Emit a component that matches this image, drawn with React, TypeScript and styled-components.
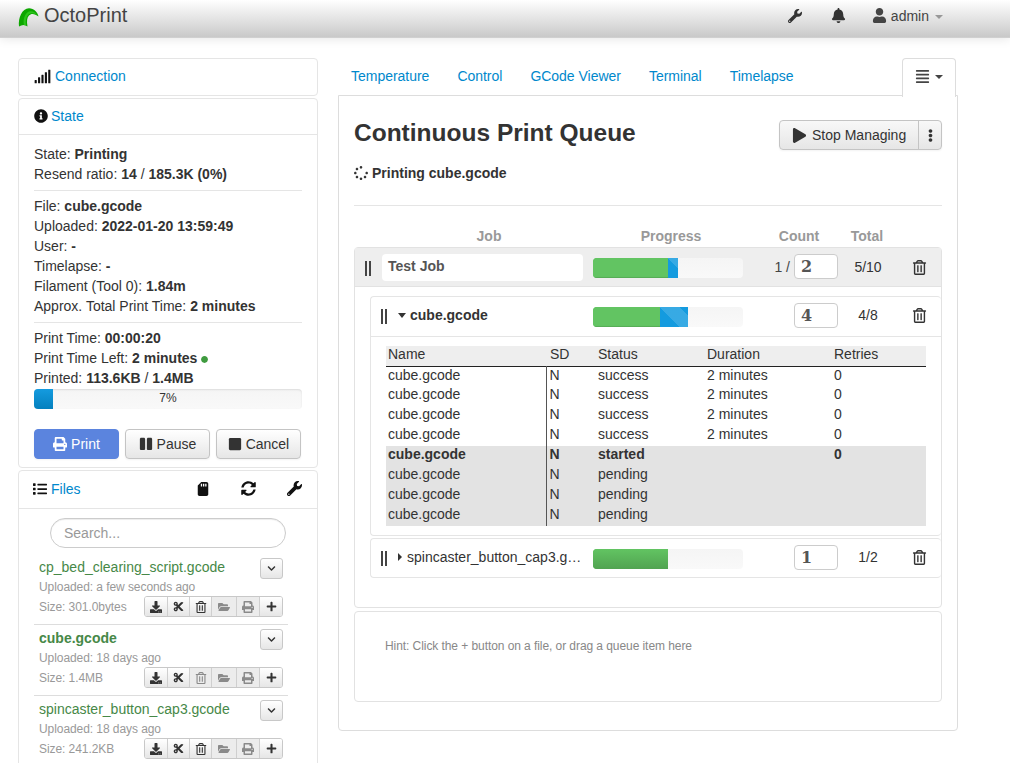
import styled, { createGlobalStyle } from "styled-components";
import {
  FaAlignJustify,
  FaBell,
  FaChevronDown,
  FaCircle,
  FaCut,
  FaDownload,
  FaEllipsisV,
  FaFolderOpen,
  FaInfoCircle,
  FaList,
  FaPause,
  FaPlay,
  FaPlus,
  FaPrint,
  FaRegTrashAlt,
  FaSdCard,
  FaSignal,
  FaSpinner,
  FaStop,
  FaSyncAlt,
  FaUser,
  FaWrench,
} from "react-icons/fa";

const historyRows = [
  { status: "success", duration: "2 minutes", retries: "0" },
  { status: "success", duration: "2 minutes", retries: "0" },
  { status: "success", duration: "2 minutes", retries: "0" },
  { status: "success", duration: "2 minutes", retries: "0" },
  { status: "started", duration: "", retries: "0", active: true },
  { status: "pending", duration: "", retries: "", pending: true },
  { status: "pending", duration: "", retries: "", pending: true },
  { status: "pending", duration: "", retries: "", pending: true },
];

const files = [
  { name: "cp_bed_clearing_script.gcode", uploaded: "a few seconds ago", size: "301.0bytes" },
  { name: "cube.gcode", uploaded: "18 days ago", size: "1.4MB", current: true },
  { name: "spincaster_button_cap3.gcode", uploaded: "18 days ago", size: "241.2KB" },
];

export default function App() {
  return (
    <Page>
      <GlobalStyle />
      <Navbar>
        <Brand>
          <svg width="21" height="19" viewBox="0 0 21 19">
            <path
              d="M1 18.5 C0 10 4 0.5 11 0.3 C16 0.3 19.5 4 20.5 8.5 C17 5.5 13 5 11 7.5 C9 9.5 8.5 13 9.5 18.5 C7 16.5 4 16.5 1 18.5 Z"
              fill="#0da600"
            />
            <path
              d="M6 17 C4.6 10.5 7.6 4 12 3.2 C15 2.8 17.5 4.4 19 6.8 C15.6 4.8 12.4 4.8 10.2 6.8 C8 9 7.4 13 8 17.2 Z"
              fill="#2bc41a"
            />
          </svg>
          OctoPrint
        </Brand>
        <NavItems>
          <NavWrench size={14} />
          <FaBell size={15} />
          <UserMenu>
            <FaUser size={15} />
            admin
            <NavCaret />
          </UserMenu>
        </NavItems>
      </Navbar>
      <Columns>
        <Sidebar>
          <Panel>
            <PanelHeading>
              <FaSignal size={17} color="#111" />
              <PanelLink>Connection</PanelLink>
            </PanelHeading>
          </Panel>
          <Panel>
            <PanelHeading $border>
              <FaInfoCircle size={14} color="#111" />
              <PanelLink>State</PanelLink>
            </PanelHeading>
            <StateBody>
              <div>State: <strong>Printing</strong></div>
              <div>Resend ratio: <strong>14</strong> / <strong>185.3K (0%)</strong></div>
              <Rule />
              <div>File: <strong>cube.gcode</strong></div>
              <div>Uploaded: <strong>2022-01-20 13:59:49</strong></div>
              <div>User: <strong>-</strong></div>
              <div>Timelapse: <strong>-</strong></div>
              <div>Filament (Tool 0): <strong>1.84m</strong></div>
              <div>Approx. Total Print Time: <strong>2 minutes</strong></div>
              <Rule />
              <div>Print Time: <strong>00:00:20</strong></div>
              <div>
                Print Time Left: <strong>2 minutes</strong> <FaCircle size={7} color="#3f9b3f" />
              </div>
              <div>Printed: <strong>113.6KB</strong> / <strong>1.4MB</strong></div>
              <JobProgress>
                <JobProgressFill />
                <JobProgressLabel>7%</JobProgressLabel>
              </JobProgress>
              <ActionRow>
                <PrintButton><FaPrint size={14} /> Print</PrintButton>
                <ActionButton><FaPause size={14} /> Pause</ActionButton>
                <ActionButton><FaStop size={14} /> Cancel</ActionButton>
              </ActionRow>
            </StateBody>
          </Panel>
          <Panel>
            <FilesHeading>
              <FilesTitle>
                <FaList size={14} color="#111" />
                <PanelLink>Files</PanelLink>
              </FilesTitle>
              <FilesTools>
                <FaSdCard size={14} />
                <FaSyncAlt size={15} />
                <FaWrench size={15} />
              </FilesTools>
            </FilesHeading>
            <FilesBody>
              <SearchBox placeholder="Search..." />
              {files.map((file) => (
                <FileItem key={file.name}>
                  <FileTop>
                    <FileName $current={file.current}>{file.name}</FileName>
                    <SmallButton><FaChevronDown size={9} /></SmallButton>
                  </FileTop>
                  <FileMeta>Uploaded: {file.uploaded}</FileMeta>
                  <FileBottom>
                    <FileMeta>Size: {file.size}</FileMeta>
                    <ButtonGroup>
                      <GroupButton $w={23}><FaDownload size={12} /></GroupButton>
                      <GroupButton $w={22}><FaCut size={11} /></GroupButton>
                      <GroupButton $w={22} $muted={file.current}><FaRegTrashAlt size={12} /></GroupButton>
                      <GroupButton $w={25} $muted><FaFolderOpen size={12} /></GroupButton>
                      <GroupButton $w={23} $muted><FaPrint size={12} /></GroupButton>
                      <GroupButton $w={22}><FaPlus size={11} /></GroupButton>
                    </ButtonGroup>
                  </FileBottom>
                </FileItem>
              ))}
            </FilesBody>
          </Panel>
        </Sidebar>
        <Main>
          <Tabs>
            <Tab>Temperature</Tab>
            <Tab>Control</Tab>
            <Tab>GCode Viewer</Tab>
            <Tab>Terminal</Tab>
            <Tab>Timelapse</Tab>
            <ActiveTab>
              <FaAlignJustify size={15} />
              <TabCaret />
            </ActiveTab>
          </Tabs>
          <TabContent>
            <TitleRow>
              <Title>Continuous Print Queue</Title>
              <SplitButton>
                <SplitMain><FaPlay size={15} /> Stop Managing</SplitMain>
                <SplitMore><FaEllipsisV size={13} /></SplitMore>
              </SplitButton>
            </TitleRow>
            <StatusLine>
              <FaSpinner size={14} /> Printing cube.gcode
            </StatusLine>
            <Divider />
            <QueueHead>
              <HeadJob>Job</HeadJob>
              <HeadProgress>Progress</HeadProgress>
              <HeadCount>Count</HeadCount>
              <HeadTotal>Total</HeadTotal>
            </QueueHead>
            <JobBox>
              <JobRow>
                <Grip />
                <JobName>Test Job</JobName>
                <Bar>
                  <Segment $color="green" $width={75} />
                  <Segment $color="blue" $width={10} />
                </Bar>
                <CountWrap>
                  <CountPrefix>1 /</CountPrefix>
                  <CountInput>2</CountInput>
                </CountWrap>
                <TotalCell>5/10</TotalCell>
                <TrashCell><FaRegTrashAlt size={15} /></TrashCell>
              </JobRow>
              <SetList>
                <SetBox>
                  <SetRow $border>
                    <Grip />
                    <SetName>
                      <CaretDown />
                      <strong>cube.gcode</strong>
                    </SetName>
                    <Bar>
                      <Segment $color="green" $width={67} />
                      <Segment $color="blue" $width={28} />
                    </Bar>
                    <CountWrap>
                      <CountInput>4</CountInput>
                    </CountWrap>
                    <TotalCell>4/8</TotalCell>
                    <TrashCell><FaRegTrashAlt size={15} /></TrashCell>
                  </SetRow>
                  <HistoryWrap>
                    <History>
                      <thead>
                        <tr>
                          <NameHead>Name</NameHead>
                          <SdHead>SD</SdHead>
                          <StatusHead>Status</StatusHead>
                          <DurationHead>Duration</DurationHead>
                          <RetriesHead>Retries</RetriesHead>
                        </tr>
                      </thead>
                      <tbody>
                        {historyRows.map((row, i) => (
                          <HistoryRow key={i} $shade={row.active || row.pending} $bold={row.active}>
                            <td>cube.gcode</td>
                            <SdCell>N</SdCell>
                            <td>{row.status}</td>
                            <td>{row.duration}</td>
                            <td>{row.retries}</td>
                          </HistoryRow>
                        ))}
                      </tbody>
                    </History>
                  </HistoryWrap>
                </SetBox>
                <SetBox>
                  <SetRow>
                    <Grip />
                    <SetName>
                      <CaretRight />
                      <Ellipsis>spincaster_button_cap3.gcode</Ellipsis>
                    </SetName>
                    <Bar>
                      <Segment $color="fade" $width={75} />
                    </Bar>
                    <CountWrap>
                      <CountInput>1</CountInput>
                    </CountWrap>
                    <TotalCell>1/2</TotalCell>
                    <TrashCell><FaRegTrashAlt size={15} /></TrashCell>
                  </SetRow>
                </SetBox>
              </SetList>
            </JobBox>
            <HintBox>Hint: Click the + button on a file, or drag a queue item here</HintBox>
          </TabContent>
        </Main>
      </Columns>
    </Page>
  );
}

const GlobalStyle = createGlobalStyle`
  html, body {
    margin: 0;
    height: 100%;
    overflow: hidden;
    background: #fff;
  }
  body {
    font-family: "Liberation Sans", Arial, sans-serif;
    font-size: 14px;
    line-height: 20px;
    color: #333;
  }
`;

const Page = styled.div`
  height: 763px;
  overflow: hidden;
`;

const Navbar = styled.header`
  height: 38px;
  box-sizing: border-box;
  display: flex;
  justify-content: space-between;
  padding: 0 67px 0 18px;
  background: linear-gradient(to bottom, #fff, #c9c9c9);
  box-shadow: 0 1px 10px rgba(0, 0, 0, 0.1);
  border-bottom: 1px solid #d0d0d0;
`;

const Brand = styled.div`
  display: flex;
  align-items: flex-start;
  gap: 5px;
  font-size: 20px;
  line-height: 30px;
  color: #444;

  svg {
    margin-top: 8px;
  }
`;

const NavItems = styled.nav`
  display: flex;
  align-items: center;
  gap: 26px;
  color: #333;
  margin-bottom: 6px;
`;

const NavWrench = styled(FaWrench)`
  margin-right: 3px;
`;

const UserMenu = styled.div`
  display: flex;
  align-items: center;
  gap: 4px;
  color: #444;
`;

const NavCaret = styled.span`
  margin-left: 2px;
  margin-top: 2px;
  border-top: 4px solid #999;
  border-left: 4px solid transparent;
  border-right: 4px solid transparent;
`;

const Columns = styled.div`
  display: flex;
  gap: 20px;
  padding: 20px 0 0 18px;
`;

const Sidebar = styled.aside`
  width: 300px;
  display: flex;
  flex-direction: column;
  gap: 2px;
`;

const Panel = styled.section`
  border: 1px solid #e5e5e5;
  border-radius: 4px;
`;

const PanelHeading = styled.div<{ $border?: boolean }>`
  height: 36px;
  box-sizing: border-box;
  display: flex;
  align-items: center;
  gap: ${(p) => (p.$border ? "3px" : "4px")};
  padding: 0 15px 2px;
  border-bottom: ${(p) => (p.$border ? "1px solid #e5e5e5" : "none")};
`;

const PanelLink = styled.a`
  color: #0088cc;
`;

const StateBody = styled.div`
  padding: 9px 15px 8px;

  strong {
    font-weight: 700;
  }

  svg {
    vertical-align: 0;
  }
`;

const Rule = styled.hr`
  margin: 6px 0 5px;
  border: 0;
  border-top: 1px solid #e5e5e5;
`;

const JobProgress = styled.div`
  position: relative;
  height: 20px;
  margin-top: 1px;
  border-radius: 4px;
  background: linear-gradient(to bottom, #f5f5f5, #f9f9f9);
  box-shadow: inset 0 1px 2px rgba(0, 0, 0, 0.1);
  overflow: hidden;
`;

const JobProgressFill = styled.div`
  width: 7%;
  height: 100%;
  background: linear-gradient(to bottom, #149bdf, #0480be);
`;

const JobProgressLabel = styled.span`
  position: absolute;
  inset: 0;
  text-align: center;
  font-size: 12px;
  line-height: 18px;
`;

const ActionRow = styled.div`
  display: flex;
  gap: 6px;
  margin-top: 20px;
`;

const ActionButton = styled.button`
  width: 85px;
  height: 30px;
  padding: 0;
  font: inherit;
  color: #333;
  border: 1px solid #c4c4c4;
  border-radius: 4px;
  background: linear-gradient(to bottom, #fff, #e6e6e6);
  box-shadow: 0 1px 2px rgba(0, 0, 0, 0.05);

  svg {
    vertical-align: -2px;
  }
`;

const PrintButton = styled(ActionButton)`
  color: #fff;
  background: #5b84de;
  border-color: #5b84de;
`;

const FilesHeading = styled.div`
  height: 38px;
  box-sizing: border-box;
  display: flex;
  justify-content: space-between;
  align-items: center;
  padding: 0 15px 2px 14px;
  border-bottom: 1px solid #e5e5e5;
`;

const FilesTitle = styled.div`
  display: flex;
  align-items: center;
  gap: 4px;
`;

const FilesTools = styled.div`
  display: flex;
  align-items: center;
  gap: 31px;
  color: #111;
`;

const FilesBody = styled.div`
  padding: 9px 29px 0 15px;
`;

const SearchBox = styled.input`
  display: block;
  box-sizing: border-box;
  width: 236px;
  height: 30px;
  margin: 0 0 6px 16px;
  padding: 0 13px;
  font: inherit;
  border: 1px solid #ccc;
  border-radius: 15px;
  outline: none;
  box-shadow: inset 0 1px 1px rgba(0, 0, 0, 0.075);

  &::placeholder {
    color: #999;
  }
`;

const FileItem = styled.div`
  width: 254px;
  height: 71px;
  box-sizing: border-box;
  padding: 4px 5px 0;
  border-bottom: 1px solid #ddd;
`;

const FileTop = styled.div`
  display: flex;
  justify-content: space-between;
  height: 19px;
`;

const FileName = styled.div<{ $current?: boolean }>`
  color: #468847;
  font-weight: ${(p) => (p.$current ? 700 : 400)};
  line-height: 18px;
`;

const SmallButton = styled.div`
  width: 23px;
  height: 21px;
  box-sizing: border-box;
  display: flex;
  align-items: center;
  justify-content: center;
  border: 1px solid #c8c8c8;
  border-radius: 3px;
  background: linear-gradient(to bottom, #fff, #e6e6e6);
`;

const FileMeta = styled.div`
  font-size: 12px;
  line-height: 20px;
  letter-spacing: -0.07px;
  color: #999;
`;

const FileBottom = styled.div`
  display: flex;
  justify-content: space-between;
  align-items: center;
  margin-top: -1px;
`;

const ButtonGroup = styled.div`
  display: flex;
  height: 21px;
  border: 1px solid #c8c8c8;
  border-radius: 3px;
  box-sizing: border-box;
  overflow: hidden;
`;

const GroupButton = styled.div<{ $w: number; $muted?: boolean }>`
  width: ${(p) => p.$w}px;
  display: flex;
  align-items: center;
  justify-content: center;
  box-sizing: border-box;
  color: ${(p) => (p.$muted ? "#8a8a8a" : "#333")};
  background: ${(p) =>
    p.$muted ? "#ececec" : "linear-gradient(to bottom, #fff, #e6e6e6)"};
  border-right: 1px solid #cfcfcf;

  &:last-child {
    border-right: 0;
  }
`;

const Main = styled.main`
  width: 620px;
`;

const Tabs = styled.div`
  height: 38px;
  display: flex;
  gap: 2px;
  position: relative;
  z-index: 1;
`;

const Tab = styled.a`
  box-sizing: border-box;
  height: 38px;
  padding: 8px 13px;
  letter-spacing: -0.02px;
  color: #0088cc;
`;

const ActiveTab = styled.div`
  box-sizing: border-box;
  margin-left: auto;
  margin-right: 2px;
  width: 54px;
  height: 39px;
  display: flex;
  align-items: center;
  gap: 5px;
  padding: 0 12px 3px;
  color: #444;
  background: #fff;
  border: 1px solid #ddd;
  border-bottom: 0;
  border-radius: 4px 4px 0 0;
`;

const TabCaret = styled.span`
  border-top: 4px solid #444;
  border-left: 4px solid transparent;
  border-right: 4px solid transparent;
`;

const TabContent = styled.div`
  box-sizing: border-box;
  height: 636px;
  padding: 24px 15px 0;
  border: 1px solid #ddd;
  border-radius: 0 0 4px 4px;
  margin-top: -1px;
`;

const TitleRow = styled.div`
  display: flex;
  justify-content: space-between;
  align-items: flex-start;
  height: 30px;
`;

const Title = styled.h2`
  margin: 0;
  font-size: 24.5px;
  line-height: 26px;
  font-weight: 700;
`;

const SplitButton = styled.div`
  display: flex;
  height: 30px;
  border: 1px solid #c4c4c4;
  border-radius: 4px;
  box-sizing: border-box;
  background: linear-gradient(to bottom, #f8f8f8, #e6e6e6);
  box-shadow: 0 1px 2px rgba(0, 0, 0, 0.05);
`;

const SplitMain = styled.div`
  width: 138px;
  box-sizing: border-box;
  padding: 0 0 0 12px;
  display: flex;
  align-items: center;
  gap: 5px;
  white-space: nowrap;

  svg {
    flex: none;
  }
`;

const SplitMore = styled.div`
  width: 22px;
  display: flex;
  align-items: center;
  justify-content: center;
  border-left: 1px solid #c4c4c4;
`;

const StatusLine = styled.div`
  display: flex;
  align-items: center;
  gap: 4px;
  margin-top: 13px;
  font-weight: 700;
`;

const Divider = styled.hr`
  margin: 22px 0 0;
  border: 0;
  border-top: 1px solid #e5e5e5;
`;

const QueueHead = styled.div`
  position: relative;
  height: 41px;
  font-weight: 700;
  color: #999;
`;

const HeadLabel = styled.span`
  position: absolute;
  top: 20px;
  transform: translateX(-50%);
`;

const HeadJob = styled(HeadLabel)`
  left: 135px;
`;

const HeadProgress = styled(HeadLabel)`
  left: 317px;
`;

const HeadCount = styled(HeadLabel)`
  left: 445px;
`;

const HeadTotal = styled(HeadLabel)`
  left: 513px;
`;

const JobBox = styled.div`
  height: 361px;
  box-sizing: border-box;
  border: 1px solid #e2e2e2;
  border-radius: 4px;
`;

const JobRow = styled.div`
  display: flex;
  align-items: center;
  height: 38px;
  padding-left: 10px;
  background: #eee;
  border-bottom: 1px solid #e2e2e2;
`;

const Grip = styled.span`
  flex: none;
  box-sizing: border-box;
  width: 6px;
  height: 15px;
  border-left: 2px solid #444;
  border-right: 2px solid #444;
  margin-top: 2px;
`;

const JobName = styled.div`
  box-sizing: border-box;
  width: 201px;
  height: 27px;
  margin: 0 10px 0 11px;
  padding: 0 6px;
  background: #fff;
  border-radius: 4px;
  font-weight: 700;
  color: #555;
  line-height: 25px;
`;

const Bar = styled.div`
  flex: none;
  display: flex;
  width: 150px;
  height: 20px;
  margin-top: 1px;
  border-radius: 4px;
  overflow: hidden;
  background: linear-gradient(to bottom, #f5f5f5, #f9f9f9);
`;

const stripes =
  "linear-gradient(45deg, rgba(255,255,255,.15) 25%, transparent 25%, transparent 50%, rgba(255,255,255,.15) 50%, rgba(255,255,255,.15) 75%, transparent 75%, transparent)";

const segmentFills = {
  green: "linear-gradient(to bottom, #62c462 92%, #51a351)",
  fade: "linear-gradient(to bottom, #62c462, #51a351)",
  blue: stripes,
};

const Segment = styled.div<{ $color: "green" | "fade" | "blue"; $width: number }>`
  width: ${(p) => p.$width}px;
  background-color: ${(p) => (p.$color === "blue" ? "#149bdf" : "#62c462")};
  background-image: ${(p) => segmentFills[p.$color]};
  background-size: ${(p) => (p.$color === "blue" ? "40px 40px" : "auto")};
`;

const CountWrap = styled.div`
  flex: none;
  box-sizing: border-box;
  width: 95px;
  display: flex;
  justify-content: flex-end;
  align-items: center;
  gap: 4px;
  margin-top: -2px;
`;

const CountPrefix = styled.span`
  color: #444;
  margin-top: 2px;
`;

const CountInput = styled.div`
  box-sizing: border-box;
  width: 44px;
  height: 25px;
  padding: 0 6px;
  font-family: "DejaVu Serif", "Liberation Serif", serif;
  font-size: 16px;
  font-weight: 700;
  line-height: 23px;
  color: #555;
  background: #fff;
  border: 1px solid #ccc;
  border-radius: 4px;
`;

const TotalCell = styled.div`
  flex: none;
  width: 60px;
  text-align: center;
`;

const TrashCell = styled.div`
  flex: none;
  width: 30px;
  margin-left: 6px;
  display: flex;
  justify-content: center;
`;

const SetList = styled.div`
  display: flex;
  flex-direction: column;
  gap: 2px;
  padding: 9px 0 0 15px;
`;

const SetBox = styled.div`
  border: 1px solid #e5e5e5;
  border-right: 0;
  border-radius: 4px;
`;

const SetRow = styled.div<{ $border?: boolean }>`
  display: flex;
  align-items: center;
  height: ${(p) => (p.$border ? "40px" : "38px")};
  box-sizing: border-box;
  padding: 0 0 ${(p) => (p.$border ? "3px" : "2px")} 10px;
  border-bottom: ${(p) => (p.$border ? "1px solid #e5e5e5" : "none")};

  ${Bar} {
    margin-top: 3px;
  }

  ${CountWrap} {
    margin-top: 0;
  }
`;

const SetName = styled.div`
  box-sizing: border-box;
  width: 196px;
  display: flex;
  align-items: center;
  gap: 4px;
  padding-left: 11px;
  margin-right: 10px;
  min-width: 0;
`;

const CaretDown = styled.span`
  flex: none;
  border-top: 5px solid #333;
  border-left: 4.5px solid transparent;
  border-right: 4.5px solid transparent;
`;

const CaretRight = styled.span`
  flex: none;
  margin-right: 1px;
  border-left: 4px solid #333;
  border-top: 4.5px solid transparent;
  border-bottom: 4.5px solid transparent;
`;

const Ellipsis = styled.span`
  overflow: hidden;
  white-space: nowrap;
  text-overflow: ellipsis;
`;

const HistoryWrap = styled.div`
  padding: 9px 15px 9px;
`;

const History = styled.table`
  width: 540px;
  table-layout: fixed;
  border-collapse: collapse;

  td,
  th {
    box-sizing: border-box;
    padding: 0 0 0 2px;
    height: 20px;
    line-height: 16px;
    vertical-align: top;
    font-weight: inherit;
    text-align: left;
  }

  thead tr {
    background: #eee;
    border-bottom: 1px solid #222;
  }
`;

const NameHead = styled.th`
  width: 160px;
`;

const SdHead = styled.th`
  width: 50px;
  padding-left: 4px !important;
`;

const StatusHead = styled.th`
  width: 109px;
`;

const DurationHead = styled.th`
  width: 127px;
`;

const RetriesHead = styled.th``;

const HistoryRow = styled.tr<{ $shade?: boolean; $bold?: boolean }>`
  background: ${(p) => (p.$shade ? "#e3e3e3" : "transparent")};
  font-weight: ${(p) => (p.$bold ? 700 : 400)};
`;

const SdCell = styled.td`
  border-left: 1px solid #555;
  padding-left: 3px !important;
`;

const HintBox = styled.div`
  height: 91px;
  box-sizing: border-box;
  margin-top: 3px;
  padding: 24px 30px;
  font-size: 12px;
  letter-spacing: -0.07px;
  color: #888;
  border: 1px solid #e2e2e2;
  border-radius: 4px;
`;
